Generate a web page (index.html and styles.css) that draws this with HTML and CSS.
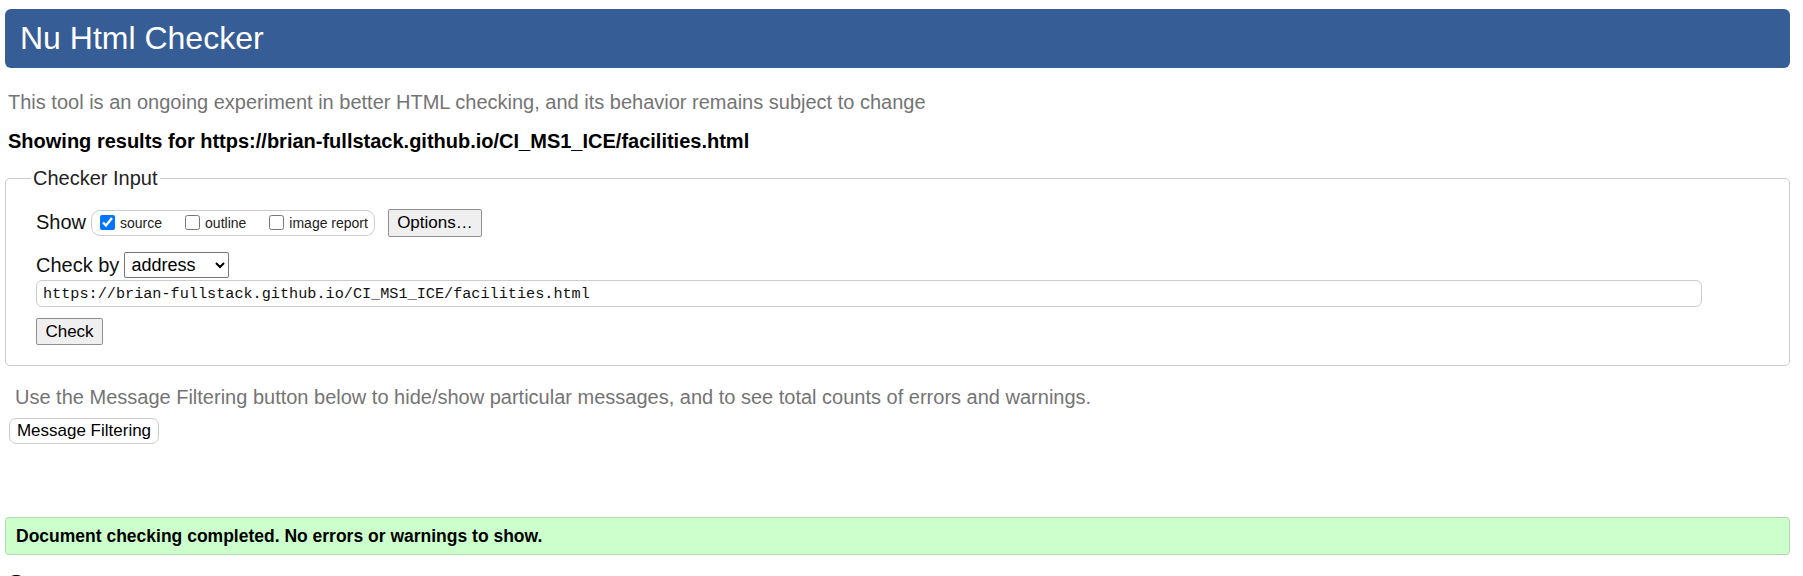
FILE: index.html
```html
<!DOCTYPE html>
<html lang="en">
<head>
<meta charset="utf-8">
<title>Showing results for https://brian-fullstack.github.io/CI_MS1_ICE/facilities.html - Nu Html Checker</title>
<link rel="stylesheet" href="styles.css">
</head>
<body>
<div class="page">
  <h1 class="title">Nu Html Checker</h1>
  <p class="intro">This tool is an ongoing experiment in better HTML checking, and its behavior remains subject to change</p>
  <p class="showing">Showing results for https://brian-fullstack.github.io/CI_MS1_ICE/facilities.html</p>
  <form class="form">
    <fieldset class="checker">
      <legend class="legend">Checker Input</legend>
      <div class="row show-row">
        <span class="row-label">Show</span>
        <span class="opts">
          <label class="opt"><input class="cb" type="checkbox" checked>source</label>
          <label class="opt"><input class="cb" type="checkbox">outline</label>
          <label class="opt"><input class="cb" type="checkbox">image report</label>
        </span>
        <button type="button" class="btn btn-options">Options…</button>
      </div>
      <div class="row by-row">
        <span class="row-label">Check by</span>
        <select class="select"><option>address</option><option>file upload</option><option>text input</option></select>
      </div>
      <div class="url-row">
        <input class="url" type="url" value="https://brian-fullstack.github.io/CI_MS1_ICE/facilities.html">
      </div>
      <div class="submit-row">
        <button type="button" class="btn btn-check">Check</button>
      </div>
    </fieldset>
  </form>
  <p class="filter-note">Use the Message Filtering button below to hide/show particular messages, and to see total counts of errors and warnings.</p>
  <button type="button" class="btn-filter">Message Filtering</button>
  <div class="success">Document checking completed. No errors or warnings to show.</div>
  <h2 class="source">Source</h2>
</div>
</body>
</html>
```
FILE: styles.css
```css
html, body {
  margin: 0;
  padding: 0;
  background: #ffffff;
}
body {
  font-family: "Liberation Sans", Arial, sans-serif;
  color: #000;
  overflow: hidden;
}
.page {
  width: 1785px;
  padding: 9px 0 0 5px;
}
.title {
  margin: 0;
  height: 59px;
  box-sizing: border-box;
  padding: 11px 15px;
  font-size: 32px;
  line-height: 37px;
  font-weight: normal;
  color: #fff;
  background: #365d95;
  border-radius: 6px;
}
.intro {
  margin: 23px 0 0 3px;
  font-size: 20px;
  line-height: 23px;
  color: #747474;
}
.showing {
  margin: 16px 0 0 3px;
  font-size: 20px;
  line-height: 23px;
  font-weight: bold;
}
.form {
  margin: 14px 0 0 0;
}
.checker {
  margin: 0;
  padding: 0 30px 20px 30px;
  border: 1px solid #cccccc;
  border-radius: 5px;
}
.legend {
  margin-left: -5px;
  padding: 0 2px;
  font-size: 20px;
  line-height: 23px;
  color: #222;
}
.row {
  display: flex;
  align-items: center;
}
.row-label {
  font-size: 20px;
  line-height: 23px;
  color: #111;
}
.show-row {
  margin-top: 18px;
  height: 29px;
}
.opts {
  display: flex;
  align-items: center;
  margin-left: 5px;
  height: 26px;
  padding: 0 6px 0 8px;
  border: 1px solid #cccccc;
  border-radius: 9px;
  box-sizing: border-box;
  gap: 23px;
}
.opt {
  display: flex;
  align-items: center;
  font-size: 14px;
  color: #222;
  white-space: nowrap;
}
.cb {
  margin: 0 5px 0 0;
  width: 15px;
  height: 15px;
  accent-color: #0075ff;
}
.btn {
  font-family: "Liberation Sans", Arial, sans-serif;
  font-size: 17px;
  color: #000;
  background: #efefef;
  border: 1px solid #8f8f8f;
  border-radius: 2px;
  padding: 0 7px;
}
.btn-options {
  margin-left: 13px;
  height: 28px;
  width: 94px;
}
.by-row {
  margin-top: 15px;
}
.select {
  margin-left: 5px;
  height: 26px;
  width: 105px;
  font-family: "Liberation Sans", Arial, sans-serif;
  font-size: 18px;
  color: #000;
  background: #fff;
  border: 1px solid #767676;
  border-radius: 2px;
  padding: 0 2px;
}
.url-row {
  margin-top: 2px;
}
.url {
  display: block;
  box-sizing: border-box;
  width: 1666px;
  height: 27px;
  margin: 0;
  padding: 0 6px;
  font-family: "Liberation Mono", "DejaVu Sans Mono", monospace;
  font-size: 15.2px;
  color: #111;
  border: 1px solid #cccccc;
  border-radius: 6px;
  background: #fff;
}
.submit-row {
  margin-top: 11px;
}
.btn-check {
  height: 27px;
  width: 67px;
}
.filter-note {
  margin: 20px 0 0 10px;
  font-size: 20px;
  line-height: 23px;
  color: #747474;
}
.btn-filter {
  display: block;
  margin: 9px 0 0 4px;
  height: 26px;
  width: 150px;
  padding: 0;
  font-family: "Liberation Sans", Arial, sans-serif;
  font-size: 17px;
  color: #000;
  background: #fff;
  border: 1px solid #cccccc;
  border-radius: 7px;
}
.success {
  margin-top: 73px;
  height: 38px;
  box-sizing: border-box;
  padding: 0 10px;
  display: flex;
  align-items: center;
  font-size: 17.5px;
  font-weight: bold;
  background: #ccffcc;
  border: 1px solid #b4d8b4;
  border-radius: 4px;
}
.source {
  margin: 15px 0 0 3px;
  font-size: 24px;
  line-height: 28px;
  font-weight: bold;
}
```
